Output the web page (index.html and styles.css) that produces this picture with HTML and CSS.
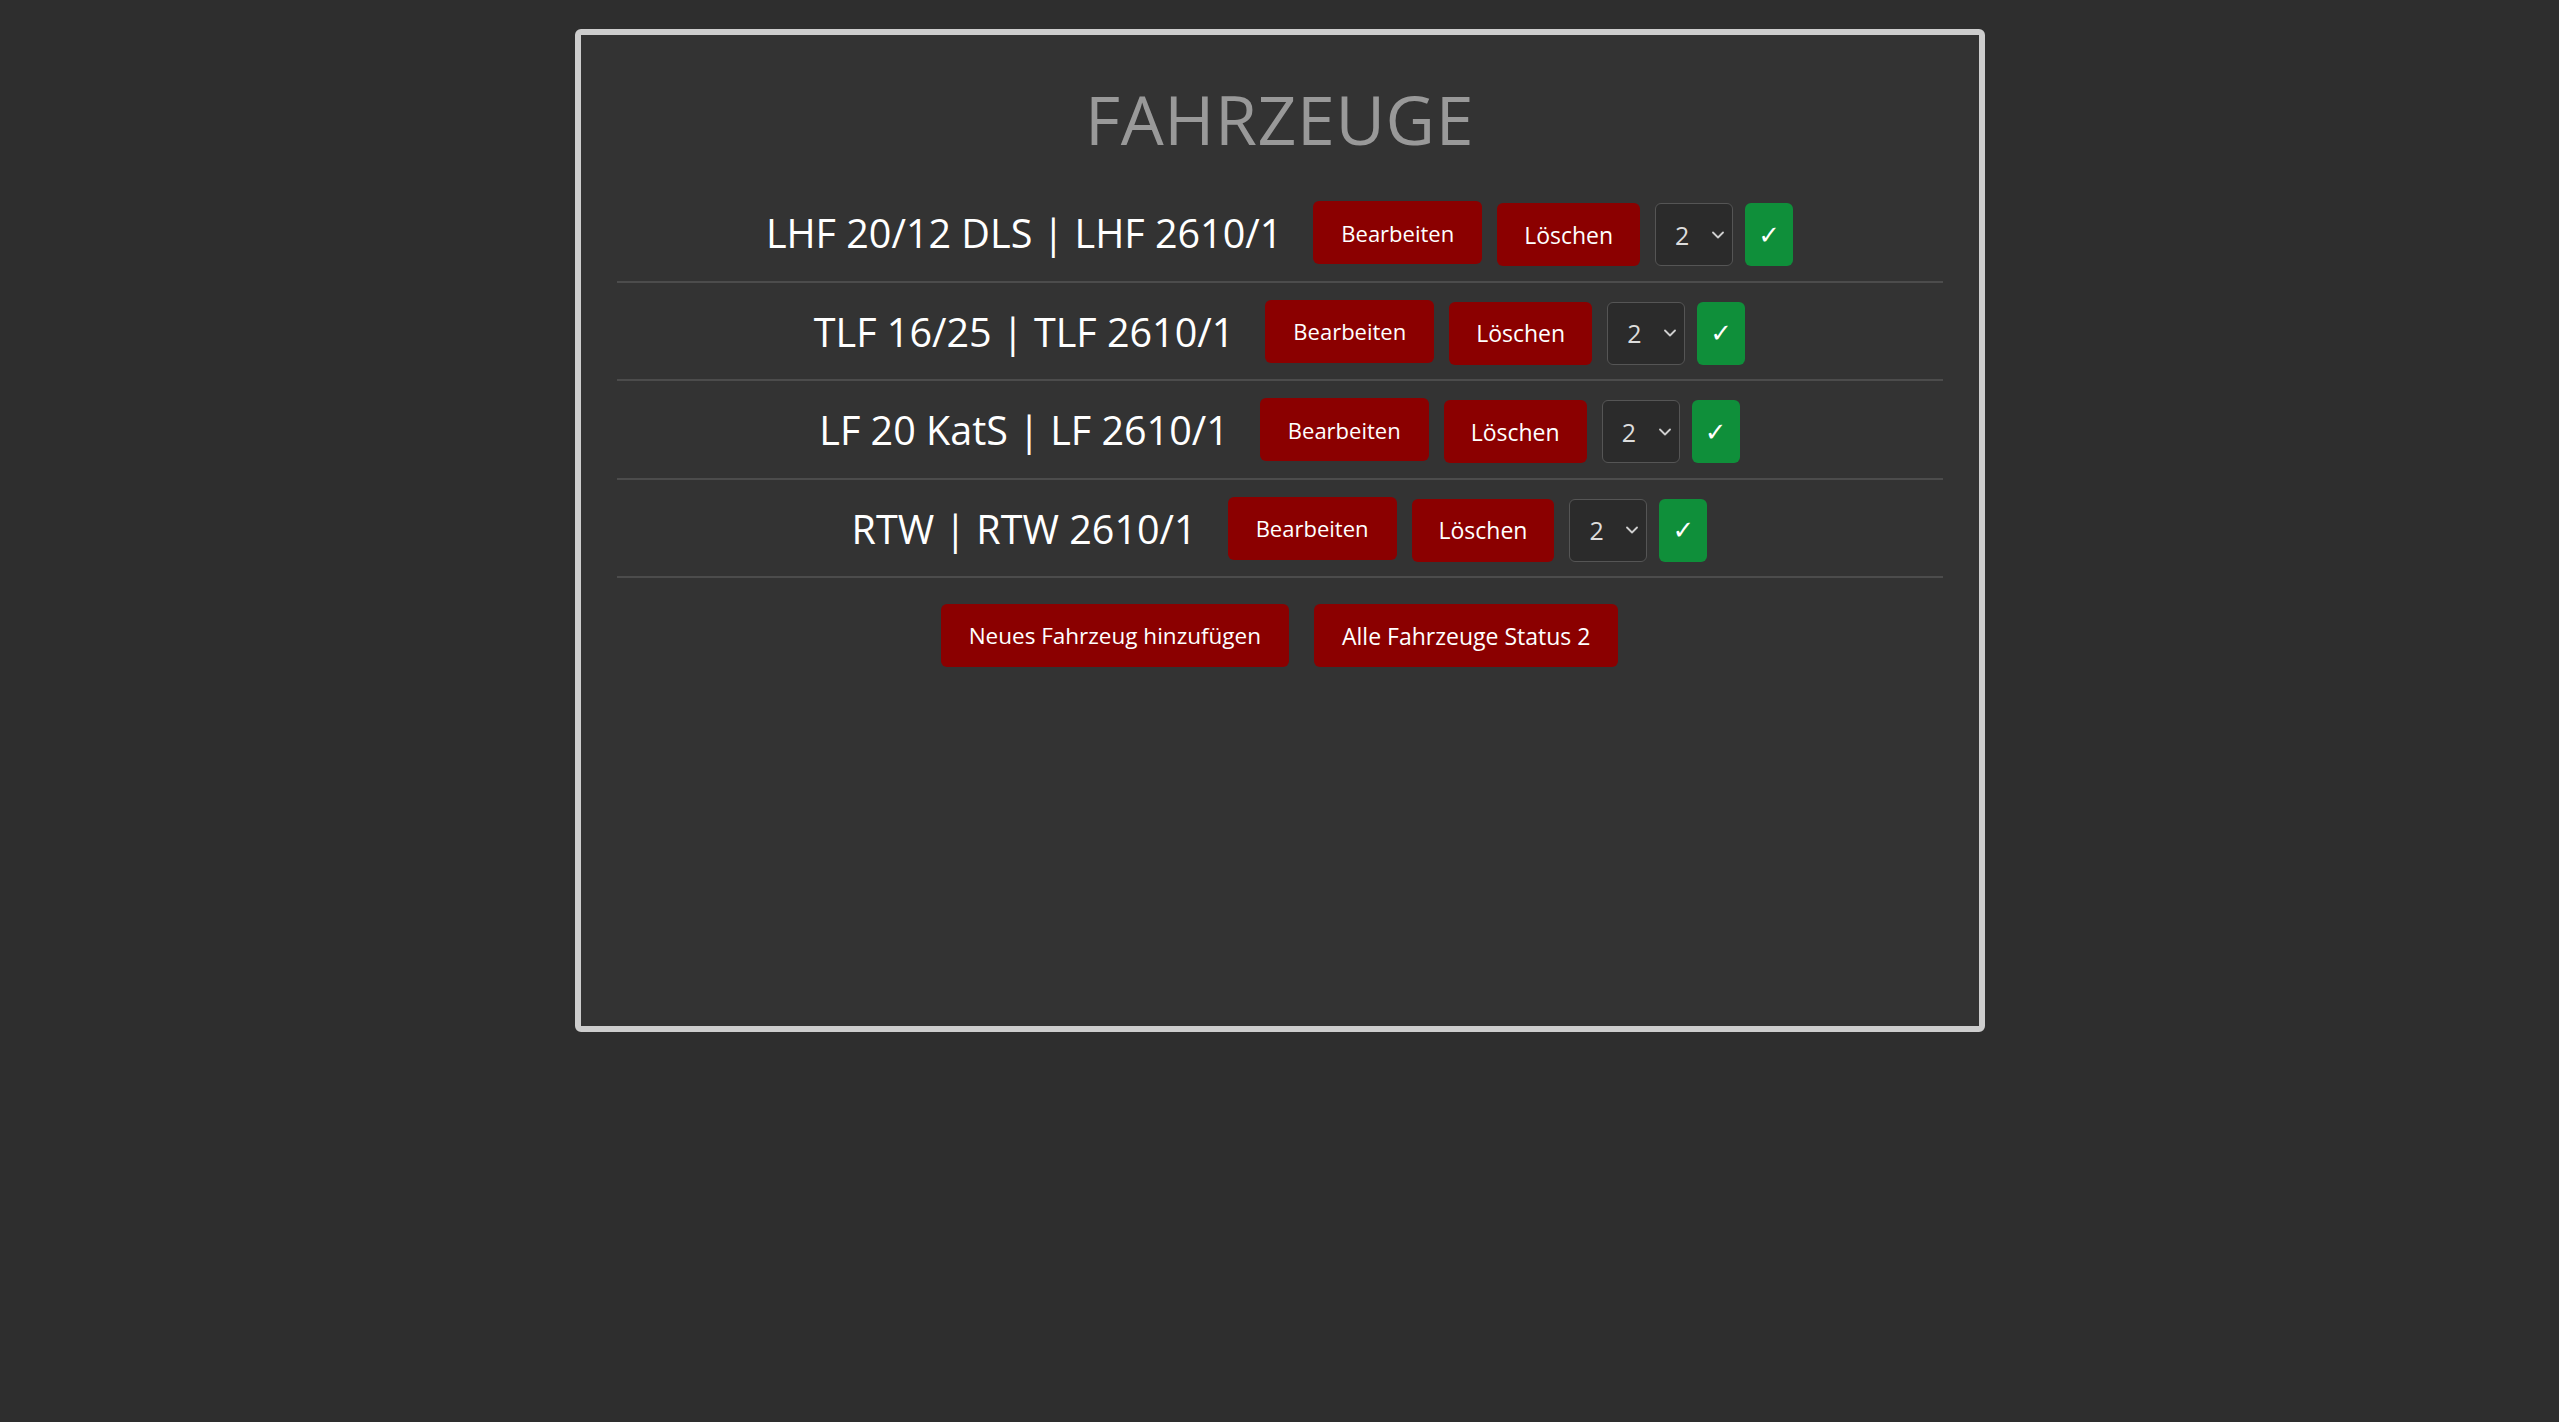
FILE: index.html
```html
<!DOCTYPE html>
<html lang="de">
<head>
<meta charset="utf-8">
<title>Fahrzeuge</title>
<link rel="stylesheet" href="styles.css">
</head>
<body>
<div class="panel">
  <h1 class="title">FAHRZEUGE</h1>
  <ul class="vehicle-list">
    <li class="vehicle-row">
      <span class="vehicle-name">LHF 20/12 DLS | LHF 2610/1</span>
      <button class="btn btn-edit">Bearbeiten</button>
      <button class="btn btn-delete">Löschen</button>
      <div class="status-select"><span class="status-value">2</span><svg class="chevron" viewBox="0 0 12 8" width="12" height="8"><path d="M1 1.5 L6 6.5 L11 1.5" fill="none" stroke="#cfcfcf" stroke-width="1.8" stroke-linecap="round" stroke-linejoin="round"/></svg></div>
      <button class="btn-confirm">✓</button>
    </li>
    <li class="vehicle-row">
      <span class="vehicle-name">TLF 16/25 | TLF 2610/1</span>
      <button class="btn btn-edit">Bearbeiten</button>
      <button class="btn btn-delete">Löschen</button>
      <div class="status-select"><span class="status-value">2</span><svg class="chevron" viewBox="0 0 12 8" width="12" height="8"><path d="M1 1.5 L6 6.5 L11 1.5" fill="none" stroke="#cfcfcf" stroke-width="1.8" stroke-linecap="round" stroke-linejoin="round"/></svg></div>
      <button class="btn-confirm">✓</button>
    </li>
    <li class="vehicle-row">
      <span class="vehicle-name">LF 20 KatS | LF 2610/1</span>
      <button class="btn btn-edit">Bearbeiten</button>
      <button class="btn btn-delete">Löschen</button>
      <div class="status-select"><span class="status-value">2</span><svg class="chevron" viewBox="0 0 12 8" width="12" height="8"><path d="M1 1.5 L6 6.5 L11 1.5" fill="none" stroke="#cfcfcf" stroke-width="1.8" stroke-linecap="round" stroke-linejoin="round"/></svg></div>
      <button class="btn-confirm">✓</button>
    </li>
    <li class="vehicle-row">
      <span class="vehicle-name">RTW | RTW 2610/1</span>
      <button class="btn btn-edit">Bearbeiten</button>
      <button class="btn btn-delete">Löschen</button>
      <div class="status-select"><span class="status-value">2</span><svg class="chevron" viewBox="0 0 12 8" width="12" height="8"><path d="M1 1.5 L6 6.5 L11 1.5" fill="none" stroke="#cfcfcf" stroke-width="1.8" stroke-linecap="round" stroke-linejoin="round"/></svg></div>
      <button class="btn-confirm">✓</button>
    </li>
  </ul>
  <div class="actions">
    <button class="btn btn-add">Neues Fahrzeug hinzufügen</button>
    <button class="btn btn-all">Alle Fahrzeuge Status 2</button>
  </div>
</div>
</body>
</html>
```
FILE: styles.css
```css
* {
  box-sizing: border-box;
}

html, body {
  margin: 0;
  padding: 0;
}

body {
  background: #2e2e2e;
  font-family: "Open Sans", "Noto Sans", "DejaVu Sans", sans-serif;
  color: #ffffff;
  padding-top: 29px;
}

.panel {
  width: 1410px;
  height: 1003px;
  margin: 0 auto;
  background: #333333;
  border: 6px solid #cdcdcd;
  border-radius: 6px;
  padding: 0 36px;
}

.title {
  margin: 50px 0 31px;
  font-size: 68px;
  line-height: 68px;
  font-weight: 400;
  color: #999999;
  text-align: center;
  letter-spacing: 0.6px;
}

.vehicle-list {
  list-style: none;
  margin: 0;
  padding: 0;
}

.vehicle-row {
  display: flex;
  align-items: center;
  justify-content: center;
  gap: 15px;
  height: 98.5px;
  padding: 17px 0 14.5px;
  border-bottom: 2px solid #4c4c4c;
}

.vehicle-name {
  font-size: 39.5px;
  line-height: 63px;
  color: #ffffff;
  margin-right: 16px;
  white-space: nowrap;
}

.btn {
  height: 63px;
  border: none;
  border-radius: 6px;
  background: #8b0000;
  color: #ffffff;
  font-family: "Open Sans", "Noto Sans", "DejaVu Sans", sans-serif;
  font-size: 22px;
  padding: 0 28px;
  cursor: pointer;
}

.btn-edit {
  align-self: flex-start;
}

.btn-delete {
  align-self: flex-end;
  font-size: 23px;
  padding: 0 27px;
}

.status-select {
  align-self: flex-end;
  width: 78px;
  height: 63px;
  display: flex;
  align-items: center;
  justify-content: space-between;
  padding: 0 8px 0 19px;
  background: #2b2b2b;
  border: 1px solid #555555;
  border-radius: 6px;
  color: #dddddd;
  font-size: 25px;
}

.chevron {
  display: block;
}

.btn-confirm {
  align-self: flex-end;
  width: 48px;
  height: 63px;
  margin-left: -3px;
  border: none;
  border-radius: 6px;
  background: #0f8f3a;
  color: #ffffff;
  font-family: "DejaVu Sans", sans-serif;
  font-size: 26px;
  padding: 0;
  cursor: pointer;
}

.actions {
  display: flex;
  justify-content: center;
  gap: 25px;
  margin-top: 26px;
}

.btn-add {
  font-size: 22.5px;
}

.btn-all {
  font-size: 23px;
}
```
